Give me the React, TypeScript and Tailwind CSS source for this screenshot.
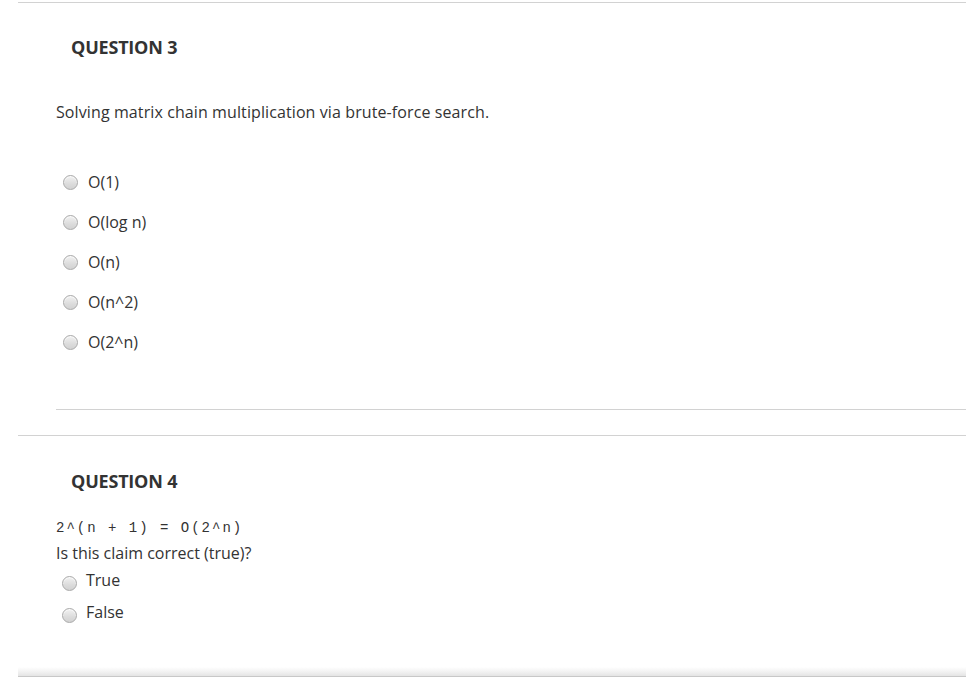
import React from "react";

const Radio = () => (
  <span className="inline-block w-[15px] h-[15px] rounded-full border border-[#a9a9a9] bg-[linear-gradient(180deg,#f2f2f2_0%,#dcdcdc_60%,#d2d2d2_100%)] shadow-[inset_0_1px_1px_rgba(255,255,255,0.8)] shrink-0" />
);

const opts = ["O(1)", "O(log n)", "O(n)", "O(n^2)", "O(2^n)"];

export default function App() {
  return (
    <div className="w-[966px] h-[679px] bg-white overflow-hidden text-[#333] font-['Open_Sans','Noto_Sans',sans-serif]">
      <div className="h-[2px]" />
      <section className="ml-[18px] border-t border-b border-[#d2d2d2]">
        <h2 className="mt-[32px] pl-[53px] text-[18px] leading-[24px] font-bold text-[#333] tracking-[-0.2px]">
          QUESTION 3
        </h2>
        <div className="ml-[38px] border-b border-[#d2d2d2] pb-[47px]">
          <p className="mt-[43px] text-[16px] leading-[20px] tracking-[0.1px]">
            Solving matrix chain multiplication via brute-force search.
          </p>
          <ul className="mt-[40px]">
            {opts.map((o) => (
              <li key={o} className="h-[40px] flex items-center pl-[7px] gap-[10px] text-[16px]">
                <Radio />
                <span className="leading-[20px]">{o}</span>
              </li>
            ))}
          </ul>
        </div>
        <div className="h-[25px]" />
      </section>
      <section className="ml-[18px]">
        <h2 className="mt-[33px] pl-[53px] text-[18px] leading-[24px] font-bold text-[#333] tracking-[-0.2px]">
          QUESTION 4
        </h2>
        <div className="ml-[38px]">
          <div className="mt-[25px] text-[14px] leading-[20px] font-['Liberation_Mono',monospace] whitespace-pre text-[#333] tracking-[2px]">
            {"2^(n + 1) = O(2^n)"}
          </div>
          <p className="mt-[5px] text-[16px] leading-[20px]">Is this claim correct (true)?</p>
          <ul className="mt-[1px]">
            {["True", "False"].map((o) => (
              <li key={o} className="h-[32px] flex items-start pl-[6px] gap-[9px] text-[16px]">
                <span className="mt-[12px] flex">
                  <Radio />
                </span>
                <span className="leading-[32px]">{o}</span>
              </li>
            ))}
          </ul>
        </div>
      </section>
      <div className="mt-[39px] ml-[18px] h-[10px] bg-[linear-gradient(180deg,#ffffff_0%,#f0f0f0_60%,#e4e4e4_100%)] border-b border-[#c8c8c8]" />
    </div>
  );
}
